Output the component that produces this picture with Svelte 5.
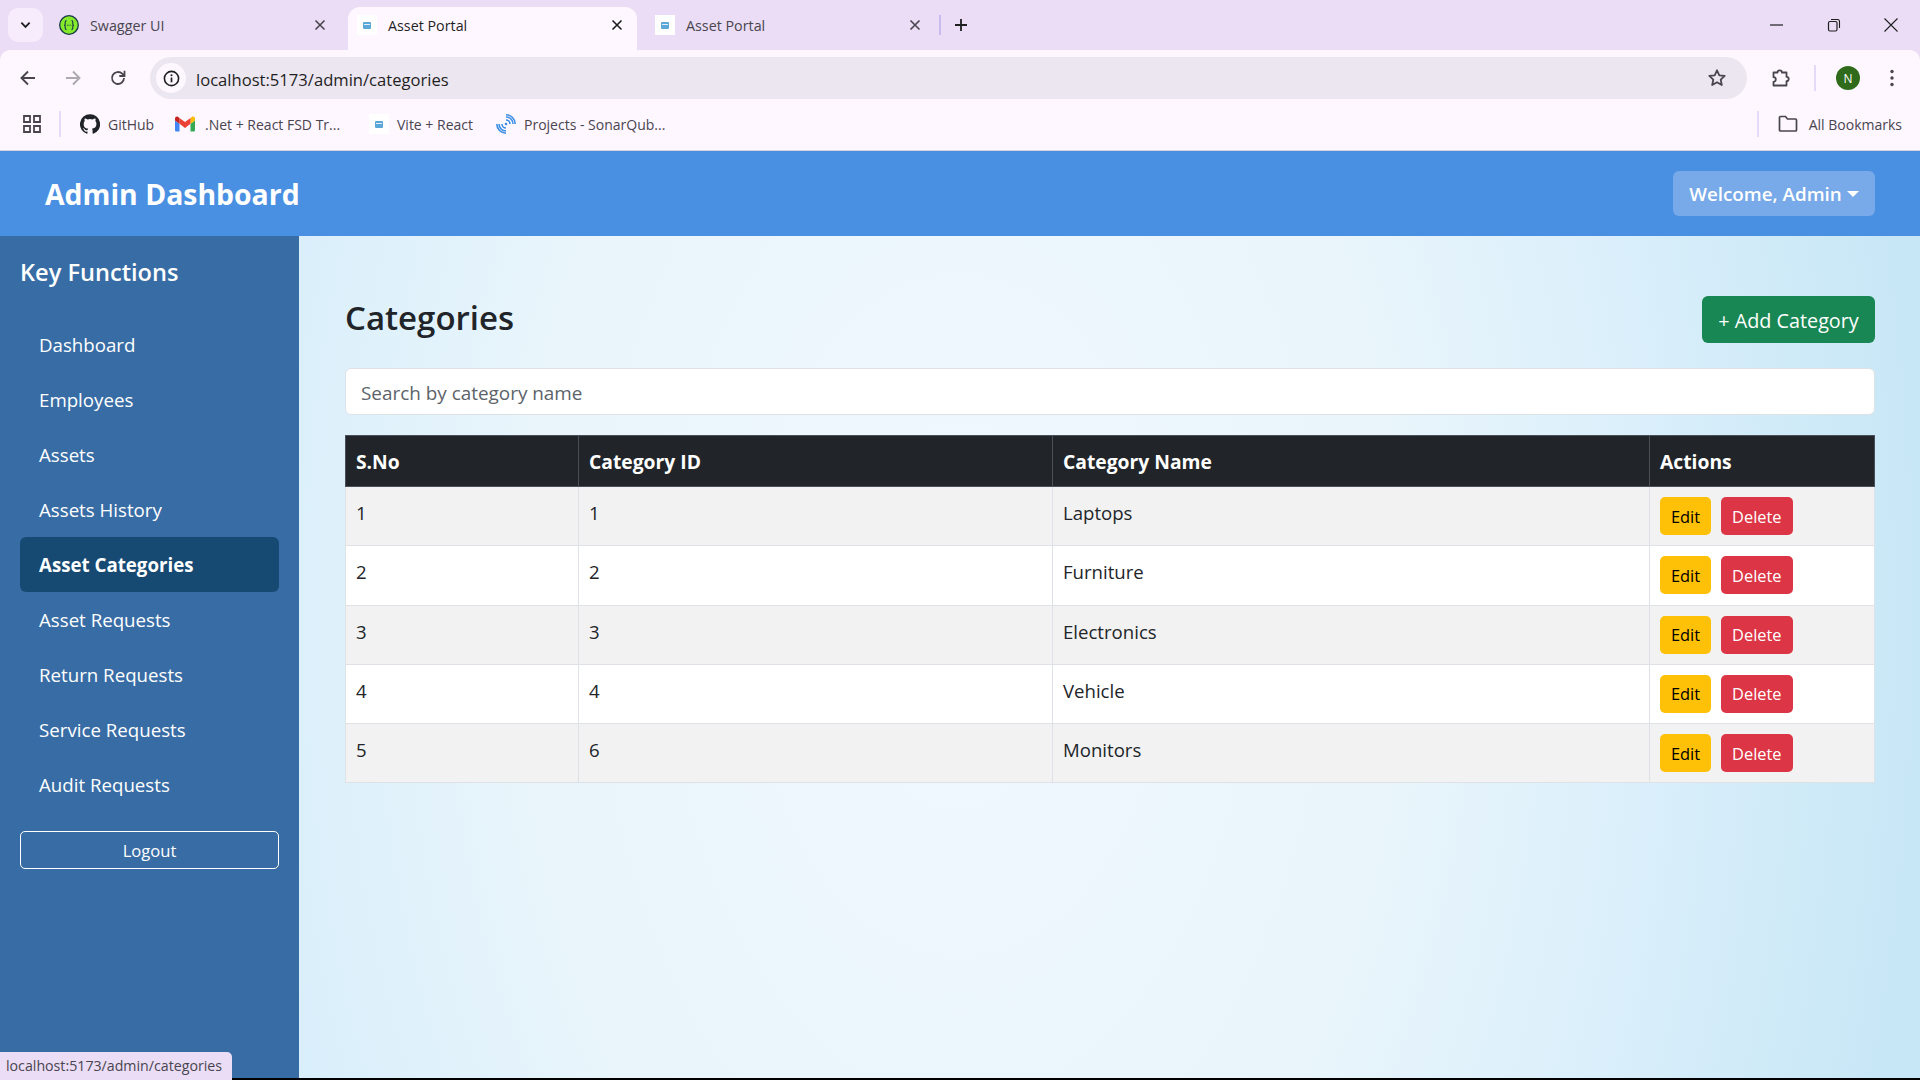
<script>
  const nav = ['Dashboard', 'Employees', 'Assets', 'Assets History', 'Asset Categories', 'Asset Requests', 'Return Requests', 'Service Requests', 'Audit Requests'];
  const rows = [
    { sno: 1, id: 1, name: 'Laptops' },
    { sno: 2, id: 2, name: 'Furniture' },
    { sno: 3, id: 3, name: 'Electronics' },
    { sno: 4, id: 4, name: 'Vehicle' },
    { sno: 5, id: 6, name: 'Monitors' }
  ];
</script>

{#snippet favicon()}
  <svg class="fav" viewBox="0 0 20 20" width="20" height="20">
    <rect width="20" height="20" fill="#fff" />
    <rect x="6" y="7" width="8" height="7" rx="1" fill="#5aa7d8" />
    <rect x="7" y="9" width="6" height="1" fill="#dff0fa" />
  </svg>
{/snippet}

{#snippet closeX(cls)}
  <svg class="close {cls}" viewBox="0 0 12 12" width="12" height="12">
    <path d="M1.5 1.5l9 9M10.5 1.5l-9 9" fill="none" stroke="currentColor" stroke-width="1.6" />
  </svg>
{/snippet}

<div class="chrome">
  <div class="tabstrip">
    <button class="tabmenu" aria-label="Tabs">
      <svg viewBox="0 0 12 8" width="11" height="8"><path d="M1.5 1.5L6 6l4.500-4.500" fill="none" stroke="#1f1f1f" stroke-width="2" /></svg>
    </button>
    <div class="tab first">
      <svg class="fav" viewBox="0 0 20 20" width="20" height="20">
        <circle cx="10" cy="10" r="9.300" fill="#85ea2d" stroke="#173647" stroke-width="1.300" />
        <path d="M7.500 5.500c-2 0-1 3.500-1.500 4.500-.2.300-.6.300-1 .3.400 0 .8 0 1 .3.500 1-.5 4 1.500 4M12.500 5.500c2 0 1 3.500 1.500 4.500.2.300.6.300 1 .3-.4 0-.8 0-1 .3-.5 1 .5 4-1.500 4" fill="none" stroke="#173647" stroke-width="1.100" />
        <path d="M8 10.300h.8M9.700 10.300h.8M11.400 10.300h.8" stroke="#173647" stroke-width="1.100" />
      </svg>
      <span class="tabtitle">Swagger UI</span>
      {@render closeX('')}
    </div>
    <div class="tab active">
      {@render favicon()}
      <span class="tabtitle">Asset Portal</span>
      {@render closeX('dark')}
    </div>
    <div class="tab">
      {@render favicon()}
      <span class="tabtitle">Asset Portal</span>
      {@render closeX('')}
    </div>
    <span class="tabsep"></span>
    <svg class="plus" viewBox="0 0 14 14" width="14" height="14"><path d="M7 1v12M1 7h12" stroke="#1f1f1f" stroke-width="1.800" /></svg>
    <div class="winctl">
      <svg viewBox="0 0 14 14" width="14" height="14"><path d="M0 7h13" stroke="#1f1f1f" stroke-width="1.200" /></svg>
      <svg viewBox="0 0 14 14" width="14" height="14"><rect x="1.500" y="3.500" width="8.500" height="9.500" rx="1.500" fill="none" stroke="#1f1f1f" stroke-width="1.200" /><path d="M4 1.500h6.500a2 2 0 0 1 2 2V10" fill="none" stroke="#1f1f1f" stroke-width="1.100" /></svg>
      <svg viewBox="0 0 14 14" width="14" height="14"><path d="M.5.500l13 13M13.500.500l-13 13" stroke="#1f1f1f" stroke-width="1.100" /></svg>
    </div>
  </div>

  <div class="toolbar">
    <svg class="tool" viewBox="0 0 18 18" width="18" height="18"><path d="M16 9H3M9 2.500L2.500 9 9 15.500" fill="none" stroke="#49454f" stroke-width="1.900" /></svg>
    <svg class="tool" viewBox="0 0 18 18" width="18" height="18"><path d="M2 9h13M9 2.500L15.500 9 9 15.500" fill="none" stroke="#aca9b0" stroke-width="1.900" /></svg>
    <svg class="tool" viewBox="0 0 18 18" width="18" height="18"><path d="M15 9a6 6 0 1 1-1.800-4.300L15.300 6.800M15.500 1.800v5.200h-5.200" fill="none" stroke="#49454f" stroke-width="1.800" /></svg>
    <div class="omnibox">
      <span class="infobubble">
        <svg viewBox="0 0 18 18" width="17" height="17"><circle cx="9" cy="9" r="7.500" fill="none" stroke="#1f1f1f" stroke-width="1.700" /><path d="M9 8v5" stroke="#1f1f1f" stroke-width="1.800" /><circle cx="9" cy="5.500" r="1.100" fill="#1f1f1f" /></svg>
      </span>
      <span class="url">localhost:5173/admin/categories</span>
      <svg class="star" viewBox="0 0 20 20" width="20" height="20"><path d="M10 2.300l2.300 5 5.400.6-4 3.700 1.100 5.400-4.800-2.700-4.800 2.700 1.100-5.400-4-3.700 5.400-.6z" fill="none" stroke="#49454f" stroke-width="1.800" stroke-linejoin="round" /></svg>
    </div>
    <svg class="ext" viewBox="0 0 20 20" width="20" height="20"><path d="M2.500 4.500h4a2.200 2.200 0 0 1 4.400 0h4.600v4.300a2.200 2.200 0 0 1 0 4.400v4.300H2.500v-3.700a2.300 2.300 0 0 0 0-4.600z" fill="none" stroke="#49454f" stroke-width="1.800" stroke-linejoin="round" /></svg>
    <span class="vsep"></span>
    <span class="avatar">N</span>
    <svg class="dots" viewBox="0 0 4 18" width="4" height="18"><circle cx="2" cy="2.500" r="1.700" fill="#49454f" /><circle cx="2" cy="9" r="1.700" fill="#49454f" /><circle cx="2" cy="15.500" r="1.700" fill="#49454f" /></svg>
  </div>

  <div class="bookmarks">
    <svg class="apps" viewBox="0 0 18 18" width="18" height="18"><path d="M1 1h6v6H1zM11 1h6v6h-6zM1 11h6v6H1zM11 11h6v6h-6z" fill="none" stroke="#49454f" stroke-width="1.800" /></svg>
    <span class="vsep bm"></span>
    <svg class="gh" viewBox="0 0 24 24" width="20" height="20"><path fill="#1f2328" d="M12 .3a12 12 0 0 0-3.800 23.400c.6.100.8-.3.800-.6v-2c-3.300.7-4-1.600-4-1.600-.5-1.400-1.300-1.800-1.300-1.800-1-.7.100-.7.100-.7 1.200.1 1.800 1.200 1.800 1.200 1 1.800 2.800 1.300 3.500 1 .1-.8.400-1.300.8-1.600-2.700-.3-5.500-1.300-5.500-6 0-1.200.5-2.300 1.300-3.100-.2-.4-.6-1.600 0-3.200 0 0 1-.3 3.400 1.200a11.500 11.500 0 0 1 6 0c2.300-1.500 3.300-1.200 3.300-1.200.6 1.600.2 2.800 0 3.200.9.800 1.300 1.900 1.300 3.200 0 4.600-2.800 5.600-5.500 5.900.5.400.9 1 .9 2.200v3.300c0 .3.100.7.800.6A12 12 0 0 0 12 .3" /></svg>
    <span class="bmtext w-gh">GitHub</span>
    <svg class="gm" viewBox="0 0 20 16" width="20" height="16">
      <path d="M1.300 15.500h3.200V7.800L0 4.400v9.800c0 .7.600 1.300 1.300 1.300z" fill="#4285f4" />
      <path d="M15.500 15.500h3.200c.7 0 1.300-.6 1.300-1.300V4.400l-4.500 3.400z" fill="#34a853" />
      <path d="M15.500 1.900v5.900L20 4.400V2.600C20 .9 18.100 0 16.800.9z" fill="#fbbc04" />
      <path d="M4.500 7.800V1.900L10 6l5.500-4.100v5.900L10 11.900z" fill="#ea4335" />
      <path d="M0 2.600v1.800l4.500 3.400V1.900L3.200.9C1.900 0 0 .9 0 2.600z" fill="#c5221f" />
    </svg>
    <span class="bmtext w-net">.Net + React FSD Tr...</span>
    {@render favicon()}
    <span class="bmtext w-vite">Vite + React</span>
    <svg class="sonar" viewBox="0 0 20 20" width="20" height="20">
      <g fill="none" stroke="#3a8ee6" stroke-width="1.600">
        <path d="M10 6A4 4 0 0 1 14 10M10 3A7 7 0 0 1 17 10M10 .8A9.200 9.200 0 0 1 19.200 10" />
        <path d="M6 10A4 4 0 0 0 10 14M3 10A7 7 0 0 0 10 17M.8 10A9.200 9.200 0 0 0 10 19.200" />
      </g>
      <circle cx="10" cy="10" r="1.300" fill="#3a8ee6" />
    </svg>
    <span class="bmtext">Projects - SonarQub...</span>
    <span class="vsep all"></span>
    <svg class="folder" viewBox="0 0 20 18" width="20" height="18"><path d="M1.500 2.500a1 1 0 0 1 1-1h5l2 2.500h8a1 1 0 0 1 1 1v10a1 1 0 0 1-1 1h-15a1 1 0 0 1-1-1z" fill="none" stroke="#49454f" stroke-width="1.700" /></svg>
    <span class="bmtext last">All Bookmarks</span>
  </div>
</div>

<header class="topbar">
  <h1>Admin Dashboard</h1>
  <button class="welcome">Welcome, Admin<span class="caret"></span></button>
</header>

<div class="body">
  <aside class="sidebar">
    <h2>Key Functions</h2>
    <nav>
      {#each nav as item}
        <a href="#top" class:current={item === 'Asset Categories'}>{item}</a>
      {/each}
    </nav>
    <button class="logout">Logout</button>
  </aside>

  <main>
    <div class="headrow">
      <h3>Categories</h3>
      <button class="add">+ Add Category</button>
    </div>
    <input class="search" placeholder="Search by category name" />
    <table>
      <thead>
        <tr>
          <th class="c1">S.No</th>
          <th class="c2">Category ID</th>
          <th class="c3">Category Name</th>
          <th>Actions</th>
        </tr>
      </thead>
      <tbody>
        {#each rows as row}
          <tr>
            <td>{row.sno}</td>
            <td>{row.id}</td>
            <td>{row.name}</td>
            <td class="actions">
              <button class="edit">Edit</button>
              <button class="delete">Delete</button>
            </td>
          </tr>
        {/each}
      </tbody>
    </table>
  </main>
</div>

<div class="status">localhost:5173/admin/categories</div>

<style>
  :global(body) {
    background: #000;
    font-family: "Open Sans", "Liberation Sans", sans-serif;
    overflow: hidden;
  }

  button {
    font-family: inherit;
    cursor: pointer;
  }

  .chrome {
    height: 151px;
    background: #eaddf5;
    color: #1f1f1f;
  }

  .tabstrip {
    display: flex;
    align-items: flex-end;
    height: 50px;
    padding-left: 8px;
    box-sizing: border-box;
  }

  .tabmenu {
    width: 35px;
    height: 34px;
    margin-bottom: 8px;
    border: 0;
    border-radius: 10px;
    background: #f6ecfb;
    display: flex;
    align-items: center;
    justify-content: center;
    padding: 0;
  }

  .tab {
    height: 43px;
    display: flex;
    align-items: center;
    padding: 0 16px 7px 10px;
    box-sizing: border-box;
    border-radius: 12px 12px 0 0;
    font-size: 14.300px;
    color: #49454f;
    flex: none;
    width: 292px;
  }

  .tab.first {
    width: 299px;
    padding-left: 16px;
    margin-right: 6px;
  }

  .tab.active {
    background: #fef7ff;
    color: #1f1f1f;
    margin-right: 8px;
    width: 289px;
    padding-left: 9px;
    padding-right: 14px;
  }

  .tabtitle {
    flex: 1;
    margin-left: 11px;
    white-space: nowrap;
  }

  .close {
    color: #49454f;
  }

  .close.dark {
    color: #1f1f1f;
  }

  .tabsep {
    width: 2px;
    height: 20px;
    background: #cbbcf0;
    margin: 0 0 15px 2px;
  }

  .plus {
    margin: 0 0 18px 13px;
  }

  .winctl {
    margin: 0 22px 18px auto;
    display: flex;
    gap: 43px;
  }

  .toolbar {
    height: 50px;
    background: #fef7ff;
    border-radius: 10px 10px 0 0;
    display: flex;
    align-items: center;
    padding-left: 19px;
    box-sizing: border-box;
  }

  .tool {
    margin: 6px 27px 0 0;
    flex: none;
  }

  .omnibox {
    width: 1597px;
    height: 42px;
    margin-left: -4px;
    margin-top: 6px;
    border-radius: 21px;
    background: #ece6f0;
    display: flex;
    align-items: center;
    padding-left: 6px;
    box-sizing: border-box;
    flex: none;
  }

  .infobubble {
    width: 30px;
    height: 30px;
    border-radius: 50%;
    background: #fef7ff;
    display: flex;
    align-items: center;
    justify-content: center;
  }

  .url {
    margin: 2px 0 0 10px;
    font-size: 16.600px;
    color: #1f1f1f;
  }

  .star {
    margin-left: auto;
    margin-right: 20px;
  }

  .ext {
    margin: 6px 0 0 24px;
  }

  .vsep {
    width: 2px;
    height: 26px;
    background: #e6daf9;
    flex: none;
  }

  .toolbar .vsep {
    margin: 6px 0 0 23px;
  }

  .avatar {
    width: 24px;
    height: 24px;
    margin: 6px 0 0 20px;
    border-radius: 50%;
    background: #2f6b1a;
    color: #fff;
    font-size: 12px;
    display: flex;
    align-items: center;
    justify-content: center;
  }

  .dots {
    margin: 6px 0 0 30px;
  }

  .bookmarks {
    height: 51px;
    background: #fef7ff;
    border-bottom: 1px solid #d9d3dd;
    box-sizing: border-box;
    display: flex;
    align-items: center;
    padding: 0 0 2px 23px;
    font-size: 14px;
    color: #49454f;
  }

  .vsep.bm {
    margin-left: 18px;
  }

  .vsep.all {
    margin-left: auto;
  }

  .gh {
    margin-left: 19px;
  }

  .bmtext {
    margin-left: 8px;
    white-space: nowrap;
  }

  .w-gh {
    width: 59px;
  }

  .gm {
    margin-left: 8px;
  }

  .w-net {
    width: 164px;
    margin-left: 10px;
  }

  .w-vite {
    width: 93px;
  }

  .sonar {
    margin-left: 6px;
  }

  .folder {
    margin-left: 19px;
  }

  .bmtext.last {
    margin: 0 18px 0 11px;
  }

  .topbar {
    height: 85px;
    background: #4a90e2;
    display: flex;
    align-items: center;
    justify-content: space-between;
    padding: 0 45px;
  }

  h1 {
    margin: 0;
    color: #fff;
    font-size: 28.400px;
    font-weight: 700;
  }

  .welcome {
    width: 202px;
    height: 45px;
    border: 0;
    border-radius: 6px;
    background: #78a9e8;
    color: #fff;
    font-size: 18.800px;
    font-weight: 600;
    padding: 0;
  }

  .caret {
    display: inline-block;
    margin-left: 5px;
    vertical-align: 4px;
    border-top: 6px solid #fff;
    border-left: 6px solid transparent;
    border-right: 6px solid transparent;
  }

  .body {
    display: flex;
    height: 842px;
  }

  .sidebar {
    width: 299px;
    flex: none;
    background: #386ca5;
    padding: 20px;
    box-sizing: border-box;
    color: #fff;
  }

  .sidebar h2 {
    margin: 0;
    font-size: 23.600px;
    font-weight: 600;
    line-height: 32px;
  }

  nav {
    display: flex;
    flex-direction: column;
    margin-top: 29px;
  }

  nav a {
    height: 55px;
    line-height: 55px;
    padding-left: 19px;
    border-radius: 6px;
    color: #fff;
    text-decoration: none;
    font-size: 18.700px;
  }

  nav a.current {
    background: #174a73;
    font-weight: 700;
  }

  .logout {
    width: 100%;
    height: 38px;
    margin-top: 19px;
    background: transparent;
    border: 1px solid #fff;
    border-radius: 5px;
    color: #fff;
    font-size: 16.600px;
  }

  main {
    flex: 1;
    padding: 60px 45px 0 46px;
    background: radial-gradient(ellipse 1100px 1800px at 661px 45%, #f0f8ff 0%, #e9f5fb 40%, #dcf0fb 60%, #c8e7f6 87%);
  }

  .headrow {
    display: flex;
    justify-content: space-between;
    align-items: center;
    height: 47px;
  }

  h3 {
    margin: -4px 0 0;
    font-size: 33px;
    font-weight: 600;
    color: #212529;
  }

  .add {
    width: 173px;
    height: 47px;
    border: 0;
    border-radius: 6px;
    background: #198754;
    color: #fff;
    font-size: 19.800px;
    padding: 2px 0 0;
  }

  .search {
    display: block;
    width: 100%;
    height: 47px;
    margin-top: 25px;
    box-sizing: border-box;
    padding: 2px 15px 0;
    border: 1px solid #dee2e6;
    border-radius: 6px;
    background: #fff;
    font-family: inherit;
    font-size: 18.900px;
    outline: none;
  }

  .search::placeholder {
    color: #5c636a;
  }

  table {
    width: 100%;
    margin-top: 20px;
    border-collapse: collapse;
    table-layout: fixed;
    font-size: 18.600px;
    color: #212529;
  }

  th {
    height: 51px;
    box-sizing: border-box;
    padding: 0 10px;
    background: #212529;
    border: 1px solid #495057;
    color: #fff;
    text-align: left;
    font-size: 19.300px;
    font-weight: 700;
  }

  .c1 {
    width: 233px;
  }

  .c2 {
    width: 474px;
  }

  .c3 {
    width: 597px;
  }

  td {
    height: 59.250px;
    box-sizing: border-box;
    padding: 10px 10px 0;
    vertical-align: top;
    border: 1px solid #dee2e6;
    background: #fff;
    line-height: 32px;
  }

  tbody tr:nth-child(odd) td {
    background: #f2f2f2;
  }

  .actions {
    white-space: nowrap;
    line-height: 0;
  }

  .actions button {
    height: 38px;
    border: 0;
    border-radius: 5px;
    font-size: 16.400px;
    padding: 0;
  }

  .edit {
    width: 51px;
    background: #ffc107;
    color: #000;
    margin-right: 5px;
  }

  .delete {
    width: 72px;
    background: #dc3545;
    color: #fff;
  }

  .status {
    position: absolute;
    left: 0;
    bottom: 0;
    width: 232px;
    height: 28px;
    line-height: 27px;
    padding-left: 6px;
    box-sizing: border-box;
    background: #eaddf5;
    border-radius: 0 5px 0 0;
    font-size: 14.200px;
    color: #49454f;
    white-space: nowrap;
  }
</style>
